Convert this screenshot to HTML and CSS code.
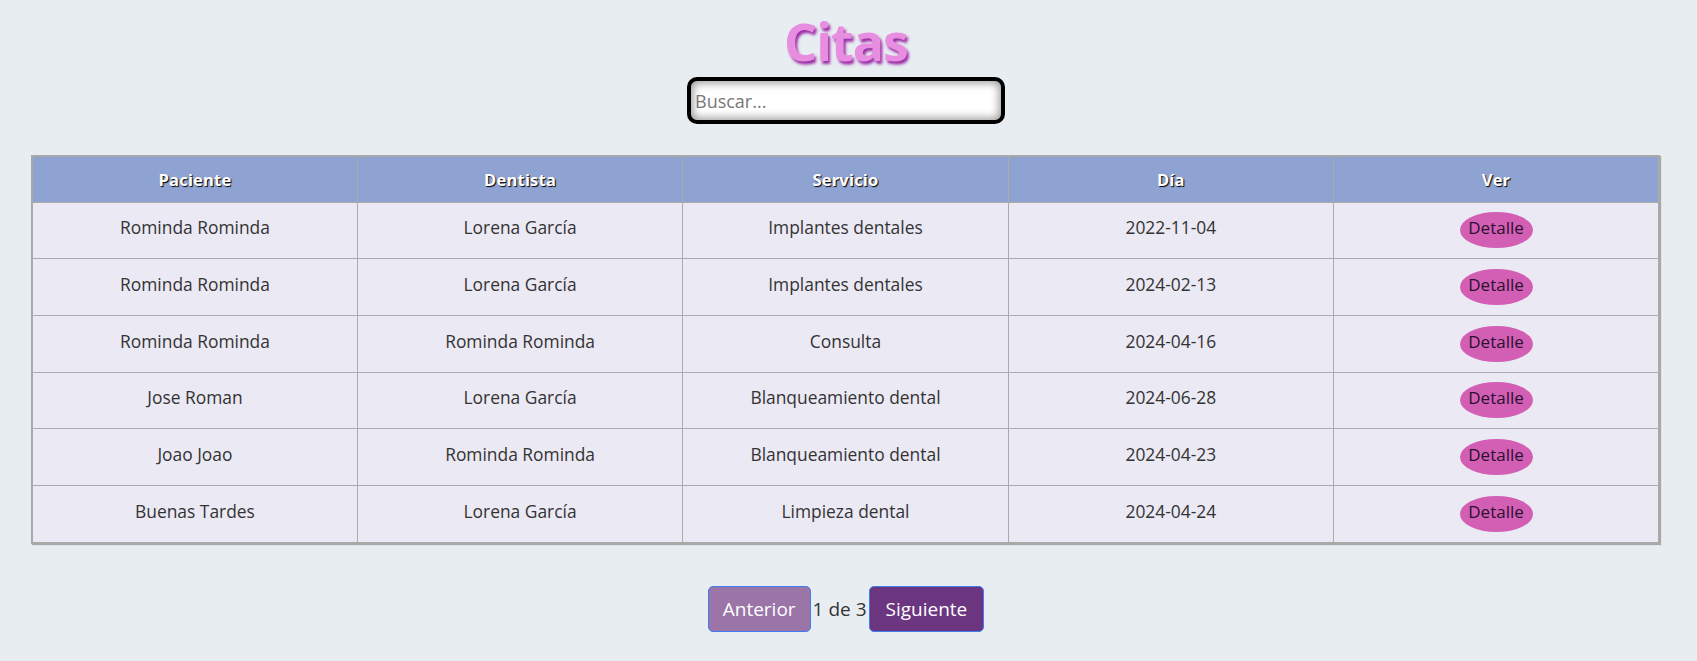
FILE: index.html
```html
<!DOCTYPE html>
<html lang="es">
<head>
<meta charset="utf-8">
<title>Citas</title>
<link rel="stylesheet" href="styles.css">
</head>
<body>
<main class="page">
  <h1 class="title">Citas</h1>
  <div class="search-wrap">
    <input class="search" type="text" placeholder="Buscar...">
  </div>
  <table class="citas">
    <thead>
      <tr><th>Paciente</th><th>Dentista</th><th>Servicio</th><th>Día</th><th>Ver</th></tr>
    </thead>
    <tbody>
      <tr><td>Rominda Rominda</td><td>Lorena García</td><td>Implantes dentales</td><td>2022-11-04</td><td class="ver"><button class="detalle">Detalle</button></td></tr>
      <tr><td>Rominda Rominda</td><td>Lorena García</td><td>Implantes dentales</td><td>2024-02-13</td><td class="ver"><button class="detalle">Detalle</button></td></tr>
      <tr><td>Rominda Rominda</td><td>Rominda Rominda</td><td>Consulta</td><td>2024-04-16</td><td class="ver"><button class="detalle">Detalle</button></td></tr>
      <tr><td>Jose Roman</td><td>Lorena García</td><td>Blanqueamiento dental</td><td>2024-06-28</td><td class="ver"><button class="detalle">Detalle</button></td></tr>
      <tr><td>Joao Joao</td><td>Rominda Rominda</td><td>Blanqueamiento dental</td><td>2024-04-23</td><td class="ver"><button class="detalle">Detalle</button></td></tr>
      <tr><td>Buenas Tardes</td><td>Lorena García</td><td>Limpieza dental</td><td>2024-04-24</td><td class="ver"><button class="detalle">Detalle</button></td></tr>
    </tbody>
  </table>
  <nav class="pager">
    <button class="pg-btn prev">Anterior</button>
    <span class="pg-info">1 de 3</span>
    <button class="pg-btn next">Siguiente</button>
  </nav>
</main>
</body>
</html>
```

FILE: styles.css
```css
html, body {
  margin: 0;
  padding: 0;
}
body {
  background: #e8edf2;
  font-family: "Open Sans", "Noto Sans", sans-serif;
  color: #333;
}
.page {
  display: flex;
  flex-direction: column;
  align-items: center;
  padding-top: 9px;
  padding-right: 5px;
}
.title {
  margin: 0;
  font-size: 52px;
  line-height: 64px;
  font-weight: 700;
  letter-spacing: -1px;
  color: #e88ee0;
  text-shadow: 2px 3px 3px #9b2aa5;
}
.search-wrap {
  margin-top: 4px;
}
.search {
  box-sizing: border-box;
  width: 318px;
  height: 47px;
  border: 4px solid #000;
  border-radius: 10px;
  box-shadow: inset 0 0 8px 2px #9a9a9a;
  background: #fff;
  font-family: inherit;
  font-size: 18px;
  padding: 0 4px;
  outline: none;
}
.search::placeholder {
  color: #777;
}
.citas {
  box-sizing: border-box;
  margin-top: 31px;
  width: calc(100% - 63px);
  margin-left: -1px;
  border-collapse: collapse;
  border: 2px solid #a9a9a9;
  box-shadow: 1px 1px 1px #a9a9a9;
  table-layout: fixed;
}
.citas th {
  background: #8fa3d3;
  color: #fff;
  font-size: 16.5px;
  font-weight: 700;
  letter-spacing: 0.2px;
  text-shadow: 1px 1px 1px #000;
  height: 44.5px;
  padding: 0;
  border: 1px solid #aaa;
}
.citas td {
  background: #ebe9f3;
  text-align: center;
  font-size: 17.4px;
  height: 49.7px;
  padding: 0 0 6px;
  border: 1px solid #aaa;
  color: #333;
}
.citas td.ver {
  height: 55.7px;
  padding: 0;
}
.detalle {
  box-sizing: border-box;
  background: #d35fb5;
  border: none;
  border-radius: 50%;
  width: 73px;
  height: 36px;
  padding: 0 0 5px;
  font-family: inherit;
  font-size: 17px;
  color: #2a1030;
  vertical-align: middle;
}
.pager {
  display: flex;
  align-items: center;
  gap: 2px;
  margin-top: 42px;
}
.pg-btn {
  height: 46px;
  padding: 0 14px;
  border: 1px solid #3f7df0;
  border-radius: 5px;
  color: #fff;
  font-family: inherit;
  font-size: 19px;
}
.prev { background: #9b74a8; }
.next {
  background: #6b3580;
  padding: 0 16px;
}
.pg-info {
  font-size: 19px;
  color: #333;
}
```
